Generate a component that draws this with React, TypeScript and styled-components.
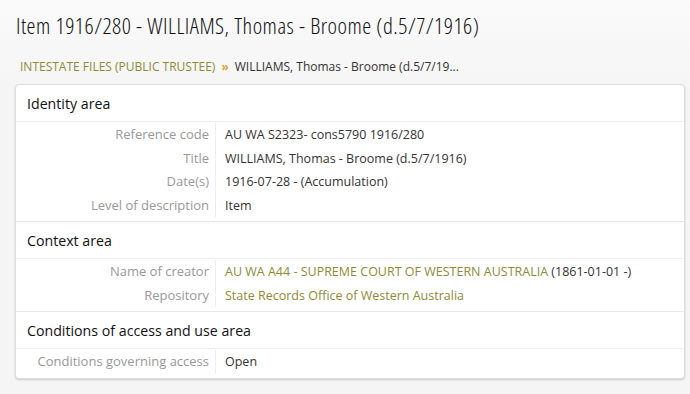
import React from "react";
import styled, { createGlobalStyle } from "styled-components";

const GlobalStyle = createGlobalStyle`
  html, body {
    margin: 0;
    padding: 0;
    background: #f5f5f5;
    font-family: "Open Sans", "Liberation Sans", sans-serif;
    color: #222;
  }
`;

const Page = styled.div`
  width: 690px;
  height: 394px;
  overflow: hidden;
  box-sizing: border-box;
  padding: 0 5px 0 15px;
  background: linear-gradient(to bottom, #fafafa 0%, #f5f5f5 90px);
`;

const Heading = styled.h1`
  margin: 0;
  padding: 10px 0 0 0;
  margin-left: 1px;
  font-size: 22.5px;
  font-stretch: condensed;
  font-weight: 300;
  letter-spacing: 0.5px;
  line-height: 32px;
  color: #111;
  white-space: nowrap;
`;

const Crumbs = styled.nav`
  display: flex;
  align-items: center;
  gap: 6px;
  padding: 14px 0 0 5px;
  height: 20px;
  font-size: 12px;
  color: #333;
`;

const Crumb = styled.a`
  color: #8d8b36;
  text-decoration: none;
`;

const Sep = styled.span`
  color: #e0a63c;
  font-size: 12px;
  font-weight: 700;
`;

const Card = styled.section`
  margin-top: 8px;
  background: #fff;
  border: 1px solid #ddd;
  border-radius: 4px;
  box-shadow: 0 1px 2px rgba(0, 0, 0, 0.18);
`;

const Section = styled.div<{ $last?: boolean }>`
  border-bottom: ${({ $last }) => ($last ? "none" : "1px solid #e8e8e8")};
`;

const SectionTitle = styled.h2`
  margin: 0;
  padding: 0 11px;
  height: 36px;
  display: flex;
  align-items: center;
  font-size: 14.2px;
  font-weight: 400;
  color: #111;
  border-bottom: 1px solid #efefef;
`;

const Fields = styled.div`
  display: grid;
  grid-template-columns: 200px 1fr;
  padding: 1px 0 4px;
`;

const Label = styled.div`
  padding: 0 6px 0 0;
  text-align: right;
  font-size: 13px;
  line-height: 23.5px;
  color: #999;
  border-right: 1px solid #eee;
`;

const Value = styled.div`
  padding: 0 9px;
  font-size: 12.5px;
  line-height: 23.5px;
  color: #333;
  white-space: nowrap;
`;

const Link = styled.a`
  color: #8d8b36;
  text-decoration: none;
`;

type Field = { label: string; value: React.ReactNode };

const sections: { title: string; fields: Field[] }[] = [
  {
    title: "Identity area",
    fields: [
      { label: "Reference code", value: "AU WA S2323- cons5790 1916/280" },
      { label: "Title", value: "WILLIAMS, Thomas - Broome (d.5/7/1916)" },
      { label: "Date(s)", value: "1916-07-28 - (Accumulation)" },
      { label: "Level of description", value: "Item" },
    ],
  },
  {
    title: "Context area",
    fields: [
      {
        label: "Name of creator",
        value: (
          <>
            <Link href="#">AU WA A44 - SUPREME COURT OF WESTERN AUSTRALIA</Link> (1861-01-01 -)
          </>
        ),
      },
      { label: "Repository", value: <Link href="#">State Records Office of Western Australia</Link> },
    ],
  },
  {
    title: "Conditions of access and use area",
    fields: [{ label: "Conditions governing access", value: "Open" }],
  },
];

export default function App() {
  return (
    <>
      <GlobalStyle />
      <Page>
        <Heading>Item 1916/280 - WILLIAMS, Thomas - Broome (d.5/7/1916)</Heading>
        <Crumbs>
          <Crumb href="#">INTESTATE FILES (PUBLIC TRUSTEE)</Crumb>
          <Sep>»</Sep>
          <span>WILLIAMS, Thomas - Broome (d.5/7/19...</span>
        </Crumbs>
        <Card>
          {sections.map((s, i) => (
            <Section key={s.title} $last={i === sections.length - 1}>
              <SectionTitle>{s.title}</SectionTitle>
              <Fields>
                {s.fields.map((f) => (
                  <React.Fragment key={f.label}>
                    <Label>{f.label}</Label>
                    <Value>{f.value}</Value>
                  </React.Fragment>
                ))}
              </Fields>
            </Section>
          ))}
        </Card>
      </Page>
    </>
  );
}
